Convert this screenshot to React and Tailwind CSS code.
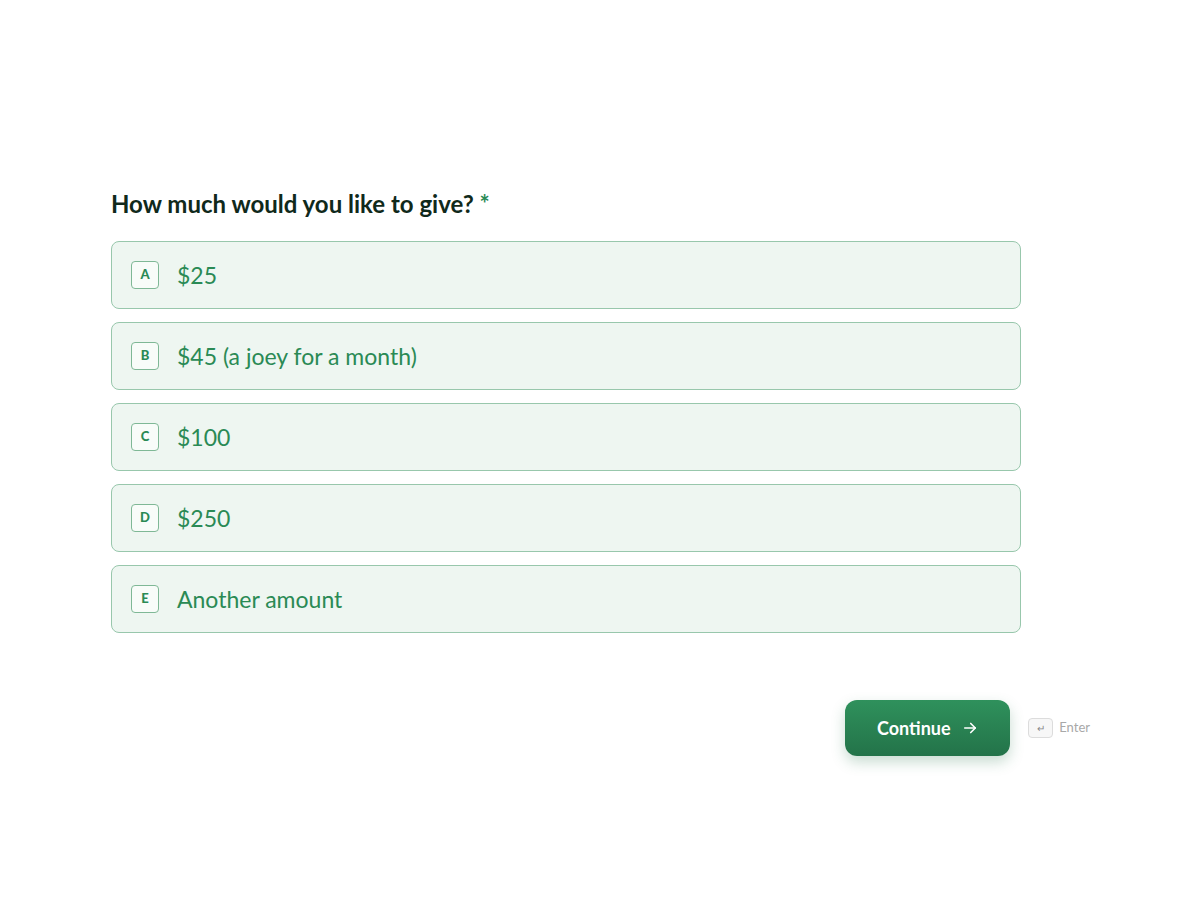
import React from 'react';

const options = [
  { key: 'A', label: '$25' },
  { key: 'B', label: '$45 (a joey for a month)' },
  { key: 'C', label: '$100' },
  { key: 'D', label: '$250' },
  { key: 'E', label: 'Another amount' },
];

export default function App() {
  return (
    <div
      className="w-full h-[900px] bg-white"
      style={{ fontFamily: '"Source Sans Pro", Lato, "Noto Sans", sans-serif' }}
    >
      <div className="pt-[186px] pl-[111px] w-[1021px]">
        <h1 className="text-[24px] leading-[36px] font-bold text-[#10291b]">
          How much would you like to give? <span className="text-[#2a8a55]">*</span>
        </h1>
        <div className="mt-[19px] flex flex-col gap-[13px]">
          {options.map((o) => (
            <div
              key={o.key}
              className="h-[68px] flex items-center gap-[18px] pl-[19px] rounded-[8px] border border-[#98c7ac] bg-[#eef6f1]"
            >
              <span className="w-[28px] h-[28px] flex items-center justify-center rounded-[4px] border border-[#7fb896] bg-[#f8fcf9] text-[13px] font-black text-[#2a8a55]">
                {o.key}
              </span>
              <span className="text-[23px] text-[#2a8a55]">{o.label}</span>
            </div>
          ))}
        </div>
      </div>
      <div className="mt-[67px] flex items-center justify-end pr-[110px] gap-[18px]">
        <button className="w-[165px] h-[56px] rounded-[12px] bg-gradient-to-b from-[#2f915c] to-[#237349] shadow-[0_6px_14px_rgba(35,115,73,0.25)] flex items-center justify-center gap-[10px] text-white text-[18px] font-bold">
          Continue
          <svg width="18" height="18" viewBox="0 0 24 24" fill="none" stroke="currentColor" strokeWidth="2.2" strokeLinecap="round" strokeLinejoin="round">
            <path d="M5 12h14" />
            <path d="M13 6l6 6-6 6" />
          </svg>
        </button>
        <div className="flex items-center gap-[6px] text-[13px] text-[#a8a8a8]">
          <span className="w-[25px] h-[20px] flex items-center justify-center rounded-[4px] border border-[#dcdcdc] bg-[#f7f7f7] text-[10px] text-[#888]">
            ↵
          </span>
          Enter
        </div>
      </div>
    </div>
  );
}
